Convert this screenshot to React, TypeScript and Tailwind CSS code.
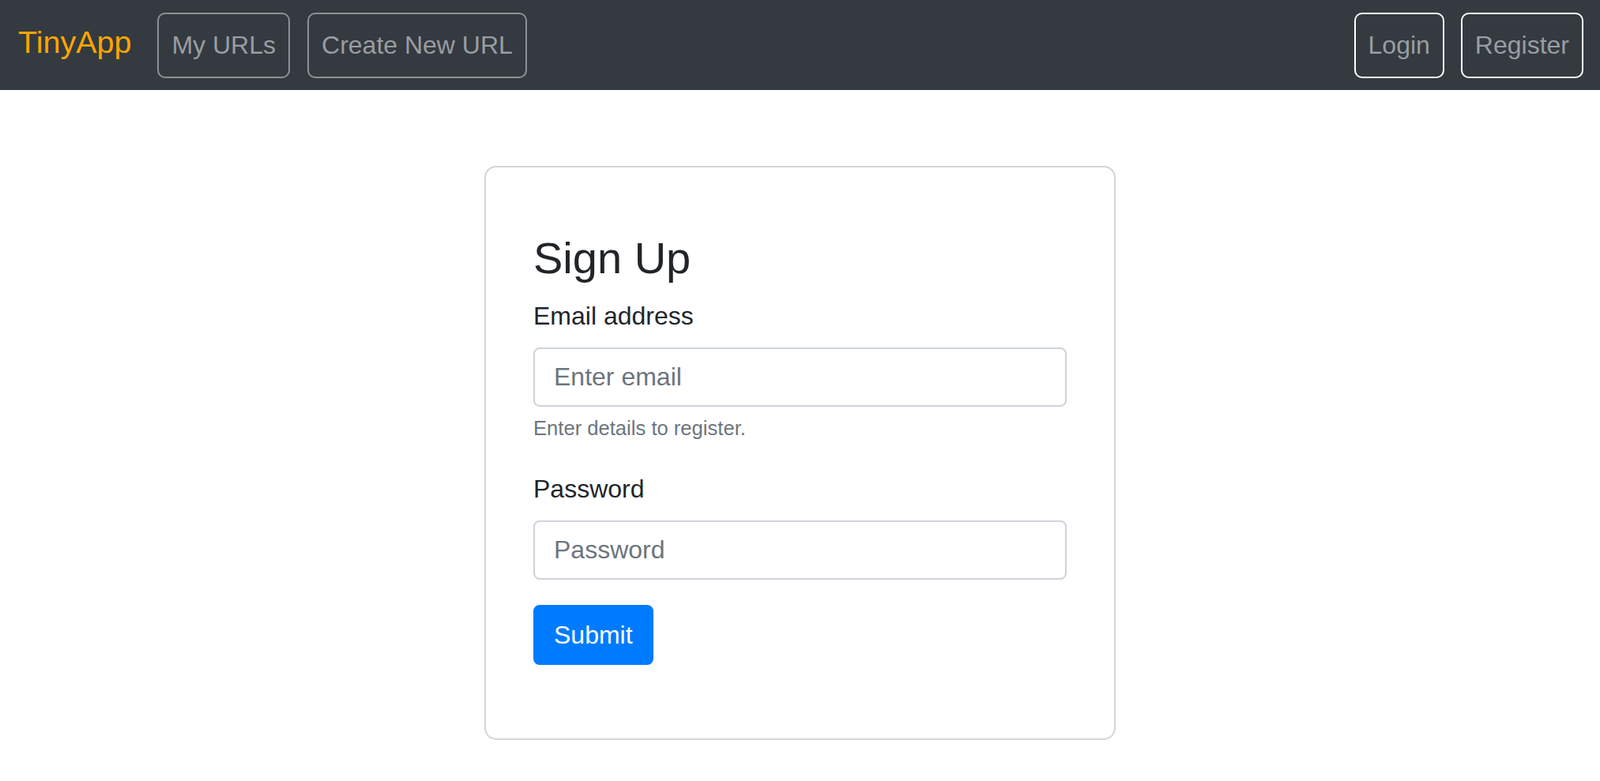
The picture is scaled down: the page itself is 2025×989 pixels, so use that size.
import React from 'react'

const font = { fontFamily: '"Liberation Sans", Arial, sans-serif' }

function NavButton({ label, light }: { label: string; light?: boolean }) {
  return (
    <a
      href="#"
      className={`flex h-[83px] items-center rounded-[10px] border-2 px-4 text-[32px] leading-[48px] text-[#9a9da0] ${
        light ? 'border-white' : 'border-[#8e9194]'
      }`}
    >
      {label}
    </a>
  )
}

export default function App() {
  return (
    <div className="min-h-screen bg-white" style={font}>
      {/* Navbar */}
      <nav className="flex h-[114px] items-center justify-between bg-[#343a40] pl-[23px] pr-[21px]">
        <div className="flex items-center">
          <a href="#" className="mb-[9px] mr-[33px] text-[39.5px] leading-[60px] text-[#ffa500]">
            TinyApp
          </a>
          <div className="flex items-center gap-[22px]">
            <NavButton label="My URLs" />
            <NavButton label="Create New URL" />
          </div>
        </div>
        <div className="flex items-center gap-[21px]">
          <NavButton label="Login" light />
          <NavButton label="Register" light />
        </div>
      </nav>

      {/* Sign up card */}
      <div className="flex justify-center pt-[96px]">
        <div className="w-[799px] rounded-[15px] border-2 border-[#d4d4d4] px-[60px] pb-[93px] pt-[81px]">
          <h3 className="mb-4 text-[56px] leading-[67px] text-[#212529]">Sign Up</h3>
          <form onSubmit={(e) => e.preventDefault()}>
            <label className="mb-4 block text-[32px] leading-[48px] text-[#212529]">Email address</label>
            <input
              type="email"
              placeholder="Enter email"
              className="block h-[75px] w-full rounded-[8px] border-2 border-[#ced4da] px-6 text-[32px] text-[#495057] outline-none placeholder:text-[#6c757d]"
            />
            <small className="mb-[34px] mt-2 block text-[25.6px] leading-[38px] text-[#6c757d]">
              Enter details to register.
            </small>
            <label className="mb-4 block text-[32px] leading-[48px] text-[#212529]">Password</label>
            <input
              type="password"
              placeholder="Password"
              className="block h-[75px] w-full rounded-[8px] border-2 border-[#ced4da] px-6 text-[32px] text-[#495057] outline-none placeholder:text-[#6c757d]"
            />
            <button
              type="submit"
              className="mt-8 h-[76px] rounded-[8px] border-2 border-[#007bff] bg-[#007bff] px-6 text-[32px] leading-[48px] text-white"
            >
              Submit
            </button>
          </form>
        </div>
      </div>
    </div>
  )
}
